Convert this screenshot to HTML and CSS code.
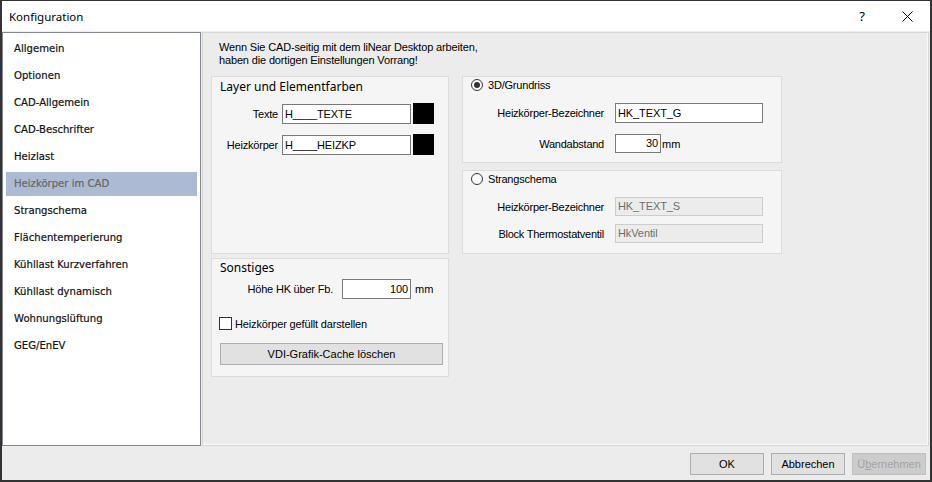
FILE: index.html
```html
<!DOCTYPE html>
<html lang="de">
<head>
<meta charset="utf-8">
<title>Konfiguration</title>
<link rel="stylesheet" href="styles.css">
</head>
<body>
<div class="window">
  <div class="titlebar">
    <span class="title">Konfiguration</span>
    <span class="help">?</span>
    <span class="close"><svg width="11" height="11" viewBox="0 0 11 11"><path d="M0.5 0.5 L10.5 10.5 M10.5 0.5 L0.5 10.5" stroke="#000" stroke-width="1" fill="none"/></svg></span>
  </div>
  <div class="main">
    <ul class="nav">
      <li>Allgemein</li>
      <li>Optionen</li>
      <li>CAD-Allgemein</li>
      <li>CAD-Beschrifter</li>
      <li>Heizlast</li>
      <li class="sel">Heizkörper im CAD</li>
      <li>Strangschema</li>
      <li>Flächentemperierung</li>
      <li>Kühllast Kurzverfahren</li>
      <li>Kühllast dynamisch</li>
      <li>Wohnungslüftung</li>
      <li>GEG/EnEV</li>
    </ul>
    <div class="panel">
      <p class="info">Wenn Sie CAD-seitig mit dem liNear Desktop arbeiten,<br>haben die dortigen Einstellungen Vorrang!</p>
      <div class="cols">
        <div class="col-left">
          <div class="group layer">
            <div class="gtitle">Layer und Elementfarben</div>
            <div class="lrow first">
              <span class="llabel">Texte</span>
              <span class="field lfield">H____TEXTE</span>
              <span class="swatch"></span>
            </div>
            <div class="lrow">
              <span class="llabel">Heizkörper</span>
              <span class="field lfield">H____HEIZKP</span>
              <span class="swatch"></span>
            </div>
          </div>
          <div class="group sonst">
            <div class="gtitle">Sonstiges</div>
            <div class="hrow">
              <span class="hlabel">Höhe HK über Fb.</span>
              <span class="field hfield">100</span>
              <span class="unit">mm</span>
            </div>
            <div class="crow">
              <span class="checkbox"></span>
              <span>Heizkörper gefüllt darstellen</span>
            </div>
            <div class="wbtn">VDI-Grafik-Cache löschen</div>
          </div>
        </div>
        <div class="col-right">
          <div class="group g3d">
            <div class="rrow">
              <span class="radio on"></span>
              <span>3D/Grundriss</span>
            </div>
            <div class="frow r1">
              <span class="flabel">Heizkörper-Bezeichner</span>
              <span class="field wide">HK_TEXT_G</span>
            </div>
            <div class="frow r2">
              <span class="flabel">Wandabstand</span>
              <span class="field narrow">30</span>
              <span class="unit2">mm</span>
            </div>
          </div>
          <div class="group gstr">
            <div class="rrow">
              <span class="radio"></span>
              <span>Strangschema</span>
            </div>
            <div class="frow s1">
              <span class="flabel">Heizkörper-Bezeichner</span>
              <span class="field wide dis">HK_TEXT_S</span>
            </div>
            <div class="frow s2">
              <span class="flabel">Block Thermostatventil</span>
              <span class="field wide dis">HkVentil</span>
            </div>
          </div>
        </div>
      </div>
    </div>
  </div>
  <div class="footer">
    <span class="btn">OK</span>
    <span class="btn">Abbrechen</span>
    <span class="btn disabled">Ü<u>b</u>ernehmen</span>
  </div>
</div>
</body>
</html>
```

FILE: styles.css
```css
html, body {
  margin: 0;
  padding: 0;
  background: #fff;
}

.window {
  width: 932px;
  height: 482px;
  box-sizing: border-box;
  border: 2px solid #333;
  border-top-width: 1px;
  background: #ececec;
  display: flex;
  flex-direction: column;
  font-family: "Liberation Sans", Arial, sans-serif;
  font-size: 11px;
  color: #000;
  overflow: hidden;
}

.titlebar {
  flex: none;
  height: 30px;
  background: #fff;
  display: flex;
  align-items: center;
}

.title {
  margin-left: 7px;
  font-family: "Noto Sans", sans-serif;
  font-size: 11.5px;
  color: #000;
}

.help {
  margin-left: auto;
  width: 46px;
  text-align: center;
  font-family: "Noto Sans", sans-serif;
  font-size: 13px;
}

.close {
  width: 45px;
  display: flex;
  justify-content: center;
  align-items: center;
}

.close svg {
  display: block;
}

.main {
  flex: none;
  height: 415px;
  display: flex;
}

.nav {
  margin: 1px 0 0 0;
  width: 199px;
  height: 414px;
  box-sizing: border-box;
  border: 1px solid #828790;
  background: #fff;
  list-style: none;
  padding: 4px 3px 0 3px;
  font-family: "DejaVu Sans", Verdana, sans-serif;
  font-size: 10.1px;
  color: #111;
  -webkit-text-stroke: 0.2px #111;
}

.nav li {
  height: 24px;
  line-height: 24px;
  margin-bottom: 3px;
  padding-left: 8px;
  white-space: nowrap;
}

.nav li.sel {
  background: #adbad4;
  color: #666;
  -webkit-text-stroke: 0.2px #666;
}

.panel {
  flex: 1;
  margin: 1px 1px 0 1px;
  box-sizing: border-box;
  border: 1px solid #d6d6d6;
  box-shadow: inset -1px -1px 0 #fafafa;
  padding: 8px 0 0 8px;
}

.info {
  margin: 0 0 0 8px;
  line-height: 13px;
  letter-spacing: -0.15px;
}

.cols {
  display: flex;
  gap: 13px;
  margin-top: 9px;
}

.col-left {
  width: 238px;
  display: flex;
  flex-direction: column;
  gap: 4px;
}

.col-right {
  width: 320px;
  display: flex;
  flex-direction: column;
  gap: 7px;
}

.group {
  box-sizing: border-box;
  border: 1px solid #dcdcdc;
  background: #f5f5f5;
}

.gtitle {
  font-family: "Noto Sans", sans-serif;
  font-size: 12px;
  line-height: 16px;
  margin-left: 8px;
  color: #000;
}

.layer {
  height: 178px;
  padding-top: 2px;
}

.lrow {
  display: flex;
  align-items: center;
  margin-top: 10px;
}

.lrow.first {
  margin-top: 8px;
}

.llabel {
  width: 66px;
  text-align: right;
  letter-spacing: -0.2px;
}

.field {
  box-sizing: border-box;
  height: 20px;
  line-height: 18px;
  border: 1px solid #7a7a7a;
  background: #fff;
  padding: 0 2px;
  white-space: nowrap;
  letter-spacing: -0.1px;
}

.lfield {
  margin-left: 4px;
  width: 129px;
}

.swatch {
  margin-left: 2px;
  width: 21px;
  height: 21px;
  background: #000;
}

.sonst {
  height: 119px;
  padding-top: 1px;
}

.hrow {
  display: flex;
  align-items: center;
  margin-top: 3px;
}

.hlabel {
  width: 121px;
  text-align: right;
  letter-spacing: -0.2px;
}

.hfield {
  margin-left: 9px;
  width: 69px;
  text-align: right;
}

.unit {
  margin-left: 4px;
}

.crow {
  display: flex;
  align-items: center;
  margin-top: 18px;
  margin-left: 7px;
  letter-spacing: -0.15px;
}

.checkbox {
  width: 13px;
  height: 13px;
  box-sizing: border-box;
  border: 1px solid #333;
  background: #fff;
  margin-right: 3px;
}

.wbtn {
  margin: 13px 0 0 8px;
  width: 223px;
  height: 22px;
  box-sizing: border-box;
  border: 1px solid #adadad;
  background: #e1e1e1;
  text-align: center;
  line-height: 20px;
}

.g3d {
  height: 87px;
  padding-top: 2px;
}

.gstr {
  height: 84px;
  padding-top: 2px;
}

.rrow {
  display: flex;
  align-items: center;
  height: 12px;
  margin-left: 8px;
  letter-spacing: -0.2px;
}

.radio {
  width: 12px;
  height: 12px;
  box-sizing: border-box;
  border: 1px solid #333;
  border-radius: 50%;
  background: #fff;
  margin-right: 5px;
  position: relative;
}

.radio.on::after {
  content: "";
  position: absolute;
  left: 2px;
  top: 2px;
  width: 6px;
  height: 6px;
  border-radius: 50%;
  background: #333;
}

.frow {
  display: flex;
  align-items: center;
}

.frow.r1 { margin-top: 12px; }
.frow.r2 { margin-top: 11px; }
.frow.s1 { margin-top: 12px; }
.frow.s2 { margin-top: 8px; }

.flabel {
  width: 141px;
  text-align: right;
  letter-spacing: -0.25px;
  margin-right: 11px;
}

.wide {
  width: 148px;
}

.narrow {
  width: 46px;
  height: 19px;
  line-height: 17px;
  text-align: right;
}

.unit2 {
  margin-left: 1px;
}

.field.dis {
  height: 19px;
  line-height: 17px;
  background: #ececec;
  border-color: #cccccc;
  color: #6d6d6d;
}

.footer {
  flex: 1;
  display: flex;
  justify-content: flex-end;
  align-items: flex-start;
  gap: 7px;
  padding: 7px 4px 0 0;
}

.btn {
  width: 74px;
  height: 22px;
  box-sizing: border-box;
  border: 1px solid #adadad;
  background: #e1e1e1;
  text-align: center;
  line-height: 20px;
}

.btn.disabled {
  background: #cccccc;
  border-color: #bfbfbf;
  color: #a3a3a3;
}

.btn u {
  text-decoration: underline;
}
```
